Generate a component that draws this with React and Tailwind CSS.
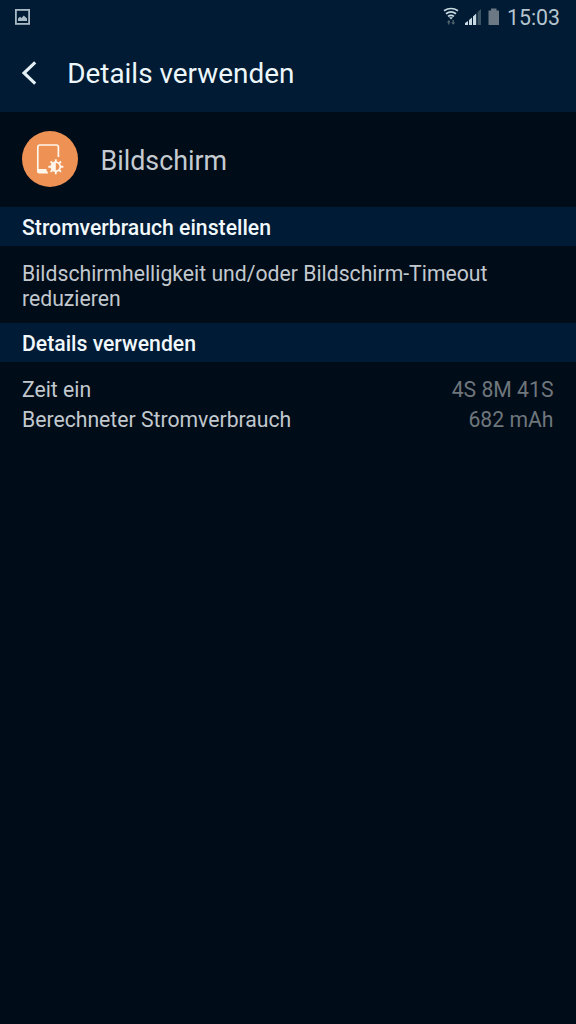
import React from "react";

function StatusBar() {
  return (
    <div className="flex h-9 items-center justify-between pl-[15px] pr-4">
      <svg className="-mt-[2px] h-4 w-[15px]" viewBox="0 0 15 16" aria-hidden="true">
        <rect x="0.9" y="0.9" width="13.2" height="14" fill="none" stroke="#a9bac5" strokeWidth="1.8" />
        <path d="M3 12V9.5L5 7.8L6.5 9L8.8 6.5L12 9.6V12Z" fill="#a9bac5" />
      </svg>
      <div className="flex items-center">
        <svg className="-mt-[2px] h-5 w-[56px]" viewBox="0 0 56 20" aria-hidden="true">
          <g fill="none" stroke="#c9d9e2" strokeWidth="1.7">
            <path d="M1 3.8Q8 -0.8 15 3.8" />
            <path d="M3 6.8Q8 3 13 6.8" />
            <path d="M5 9.4Q8 7.2 11 9.4" />
          </g>
          <path d="M6 10.2H10L8 12.4Z" fill="#c9d9e2" />
          <path d="M5.8 13.6V17.4M10.2 13V16.8" fill="none" stroke="#54656f" strokeWidth="1.3" />
          <path d="M3.8 15.6L5.8 13.2L7.8 15.6ZM8.2 15.4L10.2 17.8L12.2 15.4Z" fill="#54656f" />
          <path d="M22 18V16L25 14V18ZM26 18V13L29 10.4V18ZM30 18V9.4L33.2 6.5V18Z" fill="#c9d9e2" />
          <path d="M34.6 18V5L38 2V18Z" fill="#3c5364" />
          <path d="M45.5 3.6H48V1.6H53.5V3.6H56V18H45.5Z" fill="#6c7984" />
        </svg>
        <span className="ml-2 w-[53px] whitespace-nowrap text-[21.3px] leading-6 text-[#b5c4ce]">15:03</span>
      </div>
    </div>
  );
}

function SectionHeader({ children }) {
  return (
    <h2 className="h-[39px] bg-[#001b35] px-[22px] pt-[1px] text-[21.2px] font-medium leading-[40px] text-[#f1f8fb]">
      {children}
    </h2>
  );
}

function DisplayIcon() {
  return (
    <svg className="-mt-[1px] size-14 shrink-0" viewBox="0 0 56 56" aria-hidden="true">
      <circle cx="28" cy="28" r="28" fill="#ee9154" />
      <path d="M15.8 39V16.2Q15.8 14 18 14H34.2Q36.4 14 36.4 16.2V26" fill="none" stroke="#fff6eb" strokeWidth="1.7" />
      <path d="M15 38H24.2L26.2 42.5H17Q15 42.5 15 40.5Z" fill="#fff6eb" />
      <g transform="translate(33.8 35.7)">
        <path d="M0-7.5V7.5M-7.5 0H7.5M-5.2-5.2L5.2 5.2M5.2-5.2L-5.2 5.2" stroke="#fff6eb" strokeWidth="1.9" />
        <circle r="4.5" fill="#ee9154" stroke="#fff6eb" strokeWidth="1.7" />
        <path d="M0-4A4 4 0 0 0 0 4Z" fill="#fff6eb" />
      </g>
    </svg>
  );
}

const usage = [
  { label: "Zeit ein", value: "4S 8M 41S" },
  { label: "Berechneter Stromverbrauch", value: "682 mAh" },
];

export default function App() {
  return (
    <div className="min-h-screen bg-[#000c18] font-['Roboto',sans-serif]">
      <header className="h-28 bg-[#001b33]">
        <StatusBar />
        <div className="flex h-[76px] items-center pl-[22px]">
          <svg className="-mt-[2px] h-6 w-[15px]" viewBox="0 0 15 24" aria-hidden="true">
            <path d="M13.2 1.4L2 12L13.2 22.6" fill="none" stroke="#e5f0f5" strokeWidth="3.1" />
          </svg>
          <h1 className="ml-[30.2px] whitespace-nowrap text-[27.9px] leading-8 text-[#edf7fb]">Details verwenden</h1>
        </div>
      </header>
      <main>
        <div className="flex h-[95px] items-center gap-[22.5px] pl-[22px]">
          <DisplayIcon />
          <span className="pt-[2px] text-[26.8px] leading-8 text-[#c5cbd1]">Bildschirm</span>
        </div>
        <SectionHeader>Stromverbrauch einstellen</SectionHeader>
        <p className="h-[77px] px-[22px] pt-[15px] text-[21.2px] leading-[25px] text-[#c2c8ce]">
          Bildschirmhelligkeit und/oder Bildschirm-Timeout reduzieren
        </p>
        <SectionHeader>Details verwenden</SectionHeader>
        <dl className="pl-[22px] pr-[22.5px] pt-[13px] text-[21.2px] leading-[30px]">
          {usage.map(({ label, value }) => (
            <div key={label} className="flex justify-between">
              <dt className="text-[#c2c8ce]">{label}</dt>
              <dd className="text-[#6f767c]">{value}</dd>
            </div>
          ))}
        </dl>
      </main>
    </div>
  );
}
